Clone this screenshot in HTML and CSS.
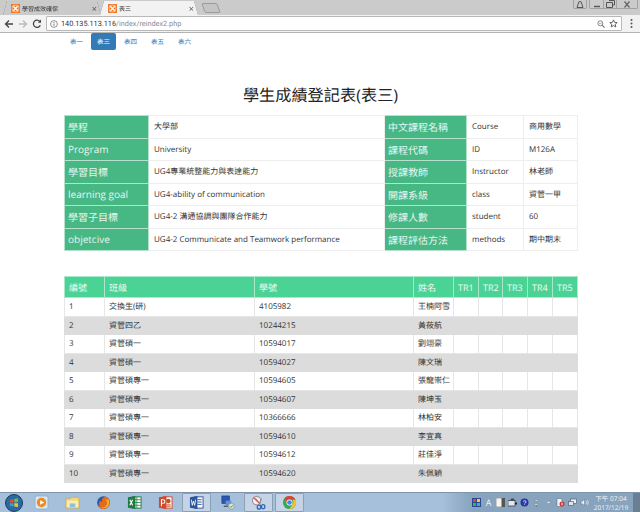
FILE: index.html
```html
<!DOCTYPE html>
<html lang="zh-Hant">
    <head>
        <meta charset="UTF-8" />
        <title>表三</title>
        <link rel="stylesheet" href="styles.css">
    </head>
    <body>
        <!-- 瀏覽器分頁列 -->
        <div class="tabstrip">
            <div class="tab">
                <div class="tab-shape">
                    <svg class="favicon" viewBox="0 0 11 11"><rect width="11" height="11" rx="1" fill="#f0701c"/><path d="M2.800 2.800l5.400 5.400M8.200 2.800L2.800 8.200" stroke="#fff" stroke-width="1.700"/><rect x="1.500" y="1.500" width="8" height="8" rx="2" fill="none" stroke="#fff" stroke-width=".7"/></svg>
                    <span class="tab-title">學習成效確保</span>
                    <span class="tab-close">×</span>
                </div>
            </div>
            <div class="tab active">
                <div class="tab-shape">
                    <svg class="favicon" viewBox="0 0 11 11"><rect width="11" height="11" rx="1" fill="#f0701c"/><path d="M2.800 2.800l5.400 5.400M8.200 2.800L2.800 8.200" stroke="#fff" stroke-width="1.700"/><rect x="1.500" y="1.500" width="8" height="8" rx="2" fill="none" stroke="#fff" stroke-width=".7"/></svg>
                    <span class="tab-title">表三</span>
                    <span class="tab-close">×</span>
                </div>
            </div>
            <div class="newtab"></div>
            <div class="winbtns">
                <div class="winbtn user"><svg viewBox="0 0 8 7" width="8" height="7"><path d="M4 .5a1.500 1.500 0 0 1 1.500 1.500L7 6.500H1L2.500 2A1.500 1.500 0 0 1 4 .5z" fill="none" stroke="#555"/></svg></div>
                <div class="winbtn min"><svg viewBox="0 0 8 7" width="8" height="7"><path d="M1 5.500h6" stroke="#555" stroke-width="1.400"/></svg></div>
                <div class="winbtn max"><svg viewBox="0 0 9 8" width="9" height="8"><path d="M3 .5h5.500v4.500H7M.5 2.500h6v5h-6z" fill="none" stroke="#555"/></svg></div>
                <div class="winbtn close"><svg viewBox="0 0 8 7" width="8" height="7"><path d="M1.500 .5l5 6M6.500 .5l-5 6" stroke="#666" stroke-width="1.300"/></svg></div>
            </div>
        </div>

        <!-- 網址列 -->
        <div class="toolbar">
            <svg class="tool" viewBox="0 0 10 10"><path d="M9 5H2M5 1.500L1.500 5 5 8.500" fill="none" stroke="#444" stroke-width="1.300"/></svg>
            <svg class="tool" viewBox="0 0 10 10"><path d="M1 5h7M5 1.500L8.500 5 5 8.500" fill="none" stroke="#bbb" stroke-width="1.300"/></svg>
            <svg class="tool" viewBox="0 0 10 10"><path d="M8.300 6.300A3.600 3.600 0 1 1 7.800 2.500" fill="none" stroke="#444" stroke-width="1.300"/><path d="M9 .6v3.200H5.800z" fill="#444"/></svg>
            <div class="omnibox">
                <svg class="info" viewBox="0 0 9 9"><circle cx="4.500" cy="4.500" r="3.800" fill="none" stroke="#666" stroke-width=".8"/><path d="M4.500 4v2.500M4.500 2.300v1" stroke="#666"/></svg>
                <span class="url"><span class="host">140.135.113.116</span>/index/reindex2.php</span>
                <svg class="omni-icon" viewBox="0 0 9 9"><circle cx="3.700" cy="3.700" r="2.800" fill="none" stroke="#777"/><path d="M5.800 5.800L8.500 8.500" stroke="#777" stroke-width="1.200"/><path d="M2.300 3.700h2.800" stroke="#777" stroke-width=".7"/></svg>
                <svg class="omni-icon star" viewBox="0 0 10 10"><path d="M5 1l1.200 2.700 2.900.3-2.200 1.900.7 2.900L5 7.300 2.400 8.800l.7-2.900L.9 4l2.900-.3z" fill="none" stroke="#555"/></svg>
            </div>
            <svg class="menu" viewBox="0 0 3 11"><circle cx="1.500" cy="2" r="1" fill="#555"/><circle cx="1.500" cy="5.500" r="1" fill="#555"/><circle cx="1.500" cy="9" r="1" fill="#555"/></svg>
        </div>

        <div class="page">
            <ul class="pills">
                <li><a href="#">表一</a></li>
                <li class="active"><a href="#">表三</a></li>
                <li><a href="#">表四</a></li>
                <li><a href="#">表五</a></li>
                <li><a href="#">表六</a></li>
            </ul>

            <h1 class="title">學生成績登記表(表三)</h1>

            <!-- 課程資料 -->
            <table class="info-table">
                <colgroup>
                    <col class="i1"><col class="i2"><col class="i3"><col class="i4"><col class="i5">
                </colgroup>
                <tr><th>學程</th><td>大學部</td><th>中文課程名稱</th><td>Course</td><td>商用數學</td></tr>
                <tr><th>Program</th><td>University</td><th>課程代碼</th><td>ID</td><td>M126A</td></tr>
                <tr><th>學習目標</th><td>UG4專業統整能力與表達能力</td><th>授課教師</th><td>Instructor</td><td>林老師</td></tr>
                <tr><th>learning goal</th><td>UG4-ability of communication</td><th>開課系級</th><td>class</td><td>資管一甲</td></tr>
                <tr><th>學習子目標</th><td>UG4-2 溝通協調與團隊合作能力</td><th>修課人數</th><td>student</td><td>60</td></tr>
                <tr><th>objetcive</th><td>UG4-2 Communicate and Teamwork performance</td><th>課程評估方法</th><td>methods</td><td>期中期末</td></tr>
            </table>

            <!-- 學生名單 -->
            <table class="grade-table">
                <colgroup>
                    <col class="g1"><col class="g2"><col class="g3"><col class="g4"><col class="g5"><col class="g6"><col class="g7"><col class="g8"><col class="g9">
                </colgroup>
                <tr><th>編號</th><th>班級</th><th>學號</th><th>姓名</th><th>TR1</th><th>TR2</th><th>TR3</th><th>TR4</th><th>TR5</th></tr>
                <tr><td>1</td><td>交換生(研)</td><td>4105982</td><td>王楠阿雪</td><td></td><td></td><td></td><td></td><td></td></tr>
                <tr><td>2</td><td>資管四乙</td><td>10244215</td><td>黃莜航</td><td></td><td></td><td></td><td></td><td></td></tr>
                <tr><td>3</td><td>資管碩一</td><td>10594017</td><td>劉翊豪</td><td></td><td></td><td></td><td></td><td></td></tr>
                <tr><td>4</td><td>資管碩一</td><td>10594027</td><td>陳文瑞</td><td></td><td></td><td></td><td></td><td></td></tr>
                <tr><td>5</td><td>資管碩專一</td><td>10594605</td><td>張龍崇仁</td><td></td><td></td><td></td><td></td><td></td></tr>
                <tr><td>6</td><td>資管碩專一</td><td>10594607</td><td>陳坤玉</td><td></td><td></td><td></td><td></td><td></td></tr>
                <tr><td>7</td><td>資管碩專一</td><td>10366666</td><td>林柏安</td><td></td><td></td><td></td><td></td><td></td></tr>
                <tr><td>8</td><td>資管碩專一</td><td>10594610</td><td>李宜真</td><td></td><td></td><td></td><td></td><td></td></tr>
                <tr><td>9</td><td>資管碩專一</td><td>10594612</td><td>莊佳淨</td><td></td><td></td><td></td><td></td><td></td></tr>
                <tr><td>10</td><td>資管碩專一</td><td>10594620</td><td>朱佩穎</td><td></td><td></td><td></td><td></td><td></td></tr>
            </table>
        </div>

        <!-- 工作列 -->
        <div class="taskbar">
            <div class="orb"><svg viewBox="0 0 18 18" width="18" height="18"><circle cx="9" cy="9" r="8.500" fill="#2c6aa2" stroke="#1c3c60"/><path d="M5 6l3.500-.8v3.300H5z" fill="#e8502c"/><path d="M9.300 5l3.700-.8v3.900L9.300 8.500z" fill="#7cbb3c"/><path d="M5 9.300h3.500v3.300L5 12z" fill="#3c9ae0"/><path d="M9.300 9.300H13v3.800l-3.700-.6z" fill="#f6c22c"/></svg></div>
            <div class="task"><svg viewBox="0 0 16 16"><rect x="1" y="1" width="14" height="14" rx="2" fill="#d7e6f2" stroke="#8fb0cc"/><circle cx="8" cy="8" r="5" fill="#f08a1c"/><path d="M6.500 5.500L11 8l-4.500 2.500z" fill="#fff"/></svg></div>
            <div class="task"><svg viewBox="0 0 16 16"><path d="M1 4h5l1-1.500h7l1 1.500v10H1z" fill="#f3d77e" stroke="#c6a040" stroke-width=".6"/><rect x="2" y="6" width="12" height="7" fill="#fbeeb4"/><path d="M5 9h6v4H5z" fill="#8cc0e0"/></svg></div>
            <div class="task"><svg viewBox="0 0 16 16"><circle cx="8" cy="8" r="6.800" fill="#2c5aa8"/><path d="M8 1.200a6.800 6.800 0 0 1 6.600 8.300c-.8 3-3.500 5.300-6.600 5.300-3 0-5.500-1.800-6.400-4.500.6.900 1.500 1.500 2.500 1.700C2.500 9.500 3.500 6.500 5 6c0 .6.800 1.100 1.500 1.100C6 5.500 7 3 9 2.500 8.800 2 8.500 1.500 8 1.200z" fill="#e8691c"/><path d="M13.500 5c1.300 3 .5 6-1.500 7.800-2 1.600-4.800 1.800-6.800.4 3 .8 6-1 6.600-3.800.3-1.600-.3-3.200-1.500-4.300 1 0 2.200.1 3.200-.1z" fill="#f6b22c"/></svg></div>
            <div class="task"><svg viewBox="0 0 16 16"><rect x="6" y="2" width="9" height="12" fill="#fff" stroke="#1f7a44"/><path d="M6 5h9M6 8h9M6 11h9M10.500 2v12" stroke="#1f7a44" stroke-width=".8"/><path d="M1 2.500L9 1v14L1 13.500z" fill="#1f7a44"/><path d="M3 5l3 6M6 5l-3 6" stroke="#fff" stroke-width="1.200"/></svg></div>
            <div class="task"><svg viewBox="0 0 16 16"><rect x="6" y="2" width="9" height="12" fill="#fff" stroke="#d2492a"/><path d="M9 10.500h4.500M9 12h4.500" stroke="#d2492a"/><circle cx="11" cy="6.500" r="2.500" fill="#d2492a"/><path d="M1 2.500L9 1v14L1 13.500z" fill="#d2492a"/><path d="M3.700 12V5h1.800a1.700 1.700 0 0 1 0 3.800H3.700" fill="none" stroke="#fff" stroke-width="1.100"/></svg></div>
            <div class="task open"><svg viewBox="0 0 16 16"><rect x="6" y="2" width="9" height="12" fill="#fff" stroke="#2b579a"/><path d="M9 5h4.500M9 7.500h4.500M9 10h4.500" stroke="#2b579a"/><path d="M1 2.500L9 1v14L1 13.500z" fill="#2b579a"/><path d="M2.500 5l1 6 1.200-4.500L6 11l1-6" fill="none" stroke="#fff" stroke-width=".9"/></svg></div>
            <div class="task"><svg viewBox="0 0 16 16"><rect x="2" y="1" width="8" height="8" fill="#2a58b0" stroke="#16306a" stroke-width=".6"/><rect x="6" y="6" width="6" height="5" fill="#6a8fd8"/><path d="M4 12h7" stroke="#444" stroke-width="1.200"/><circle cx="12" cy="12" r="3.200" fill="#dce6d8" stroke="#6d8b65" stroke-width=".6"/><path d="M10.500 12l1.200 1.300 2-2.300" fill="none" stroke="#3d9a3d"/></svg></div>
            <div class="task open"><svg viewBox="0 0 16 16"><circle cx="6" cy="6" r="4.500" fill="#eef0f2" stroke="#9a9a9a" stroke-width="1.200"/><path d="M2.800 2.800l6.400 6.400" stroke="#d84040" stroke-width="1.200"/><path d="M5 3.500l5.500 7M11 3.500L9 9" stroke="#8a8a8a"/><ellipse cx="8.500" cy="13" rx="1.800" ry="2.200" fill="none" stroke="#2e6ab8" stroke-width="1.400"/><ellipse cx="13" cy="12.500" rx="1.800" ry="2.200" fill="none" stroke="#2e6ab8" stroke-width="1.400"/></svg></div>
            <div class="task open"><svg viewBox="0 0 16 16"><circle cx="8" cy="8" r="7" fill="#3aa757"/><path d="M8 1a7 7 0 0 1 6.300 4H8a3 3 0 0 0-2.800 2L2.600 3.500A7 7 0 0 1 8 1z" fill="#e0402e"/><path d="M14.300 5A7 7 0 0 1 8 15l3-5a3 3 0 0 0-.2-5z" fill="#fbc02d"/><circle cx="8" cy="8" r="3.200" fill="#fff"/><circle cx="8" cy="8" r="2.500" fill="#4285f4"/></svg></div>

            <div class="tray">
                <svg class="tray-icon" viewBox="0 0 9 9"><rect width="9" height="9" fill="#2a4a90"/><path d="M1 1h3v3H1z" fill="#e04030"/><path d="M5 1h3v3H5z" fill="#f0d030"/><path d="M1 5h3v3H1z" fill="#40b050"/><path d="M5 5h3v3H5z" fill="#50a0e0"/></svg>
                <span class="tray-letter">A</span>
                <svg class="tray-icon" viewBox="0 0 9 9"><rect width="9" height="9" fill="#f4f4f4" stroke="#555" stroke-width=".5"/><rect x="5.500" width="3.500" height="9" fill="#555"/></svg>
                <svg class="tray-icon" viewBox="0 0 9 9"><rect x="0" y="2.500" width="7" height="5.500" fill="#e4e8ec" stroke="#334" stroke-width=".7"/><path d="M2 2.500L3.500 .5h2L7 2.500" fill="#445"/><path d="M7 4.500h2v2H7z" fill="#223"/></svg>
                <svg class="tray-icon" viewBox="0 0 9 9"><circle cx="4.500" cy="4.500" r="4" fill="#2538a8"/><text x="4.500" y="7" font-size="6.500" text-anchor="middle" fill="#fff" font-family="Liberation Sans">?</text></svg>
                <svg class="tray-icon" viewBox="0 0 9 9"><path d="M3 1.500h3v1.500H3zM2.500 5.500h3.500v1.500H2.500z" fill="#e8eef4" stroke="#567" stroke-width=".4"/><path d="M4 7.500h1v1H4z" fill="#567"/></svg>
                <svg class="tray-icon" viewBox="0 0 9 9"><path d="M3 5l1.500-1.500L6 5z" fill="#f0f4f8"/></svg>
                <svg class="tray-icon" viewBox="0 0 9 9"><path d="M1 .5h4l1 1.500v6.500H1z" fill="#eef2f6" stroke="#567" stroke-width=".5"/><circle cx="6" cy="6" r="2.500" fill="#d83030"/><path d="M6 4.700v2.600" stroke="#fff"/></svg>
                <svg class="tray-icon" viewBox="0 0 9 9"><rect x="2.500" y="1" width="6" height="4.500" fill="#e8eef4" stroke="#456" stroke-width=".6"/><rect x=".5" y="3.500" width="5" height="4" fill="#dde6ee" stroke="#456" stroke-width=".6"/></svg>
                <svg class="tray-icon" viewBox="0 0 9 9"><path d="M1 3.200h1.500L4.500 1.200v6.600L2.500 5.800H1z" fill="#e8eef4" stroke="#567" stroke-width=".4"/><path d="M6 3a2 2 0 0 1 0 3M7.200 2a3.500 3.500 0 0 1 0 5" fill="none" stroke="#e8eef4" stroke-width=".7"/></svg>
            </div>
            <div class="clock">
                <div>下午 07:04</div>
                <div>2017/12/19</div>
            </div>
            <div class="showdesk"></div>
        </div>
    </body>
</html>
```

FILE: styles.css
```css
html, body {
    margin: 0;
    padding: 0;
    height: 100%;
    overflow: hidden;
}

body {
    display: flex;
    flex-direction: column;
    background-color: #fff;
    font-family: "Open Sans", "Noto Sans CJK TC", sans-serif;
    text-rendering: geometricPrecision;
    color: #333;
}

/* 分頁列 */
.tabstrip {
    height: 15px;
    flex: none;
    display: flex;
    align-items: flex-end;
    padding-left: 3px;
    background-color: #cbcbcb;
}

.tab {
    width: 98px;
    height: 14px;
    margin-right: -1px;
    filter: drop-shadow(0 0 .6px #666);
}

.tab-shape {
    height: 100%;
    padding: 0 4px 0 8px;
    box-sizing: border-box;
    display: flex;
    align-items: center;
    background-color: #cacaca;
    clip-path: polygon(0 100%, 4px 0, 94px 0, 98px 100%);
    font-size: 6px;
    color: #333;
}

.tab.active .tab-shape {
    background-color: #f2f2f2;
}

.favicon {
    width: 9px;
    height: 9px;
    flex: none;
    margin-right: 2px;
}

.tab-title {
    flex: 1;
    white-space: nowrap;
}

.tab-close {
    font-size: 9px;
    line-height: 1;
    color: #444;
}

.newtab {
    width: 14px;
    height: 8px;
    margin-left: 6px;
    margin-bottom: 2px;
    background-color: #c4c4c4;
    border: 1px solid #9a9a9a;
    border-radius: 2px;
    transform: skewX(20deg);
}

.winbtns {
    margin-left: auto;
    margin-right: 2px;
    align-self: flex-start;
    display: flex;
}

.winbtn {
    height: 8px;
    display: flex;
    align-items: center;
    justify-content: center;
    border: 1px solid #a2a2a2;
    border-top: none;
    margin-right: -1px;
}

.winbtn svg {
    display: block;
}

.winbtn.user {
    width: 12px;
    margin-right: 2px;
    border-radius: 0 0 2px 2px;
}

.winbtn.min {
    width: 13px;
    border-radius: 0 0 0 2px;
}

.winbtn.max {
    width: 12px;
}

.winbtn.close {
    width: 20px;
    margin-right: 0;
    border-radius: 0 0 2px 0;
}

/* 網址列 */
.toolbar {
    height: 18px;
    flex: none;
    box-sizing: border-box;
    display: flex;
    align-items: center;
    padding-left: 4px;
    background-color: #f2f2f2;
    border-bottom: 1px solid #b4b4b4;
}

.tool {
    width: 10px;
    height: 10px;
    flex: none;
    margin-right: 4px;
}

.omnibox {
    width: 576px;
    height: 15px;
    box-sizing: border-box;
    display: flex;
    align-items: center;
    padding: 0 3px;
    background-color: #fff;
    border: 1px solid #b8b8b8;
    border-radius: 1px;
    font-family: Roboto, sans-serif;
    font-size: 7.300px;
}

.info {
    width: 8px;
    height: 8px;
    margin-right: 3px;
}

.url {
    flex: 1;
    color: #8a8a8a;
}

.host {
    color: #333;
}

.omni-icon {
    width: 8px;
    height: 8px;
    margin-left: 4px;
}

.omni-icon.star {
    width: 9px;
    height: 9px;
}

.menu {
    width: 3px;
    height: 11px;
    margin-left: 8px;
}

/* 內容 */
.page {
    flex: 1;
    min-height: 0;
    padding-left: 64px;
}

.pills {
    display: flex;
    gap: 2px;
    margin: 0;
    padding: 0;
    list-style: none;
}

.pills a {
    display: block;
    width: 25px;
    height: 17px;
    border-radius: 2px;
    font-size: 6.500px;
    line-height: 17px;
    text-align: center;
    text-decoration: none;
    color: #337ab7;
}

.pills .active a {
    background-color: #337ab7;
    color: #fff;
}

.title {
    width: 513px;
    margin: 34px 0 0;
    font-size: 16.200px;
    font-weight: 400;
    line-height: 22px;
    text-align: center;
    color: #222;
}

table {
    width: 513px;
    table-layout: fixed;
    border-collapse: collapse;
    font-size: 8px;
}

th, td {
    padding: 0 0 0 5px;
    border: 1px solid #eee;
    text-align: left;
    font-weight: 400;
    white-space: nowrap;
    overflow: hidden;
}

.info-table {
    margin-top: 9px;
}

.info-table tr {
    height: 22.500px;
}

.info-table th {
    padding-left: 3px;
    background-color: #47b784;
    border-color: #b4e2cd;
    font-size: 10px;
    color: #e8f6ef;
}

.i1 { width: 84px; }
.i2 { width: 236px; }
.i3 { width: 82px; }
.i4 { width: 57px; }
.i5 { width: 54px; }

.grade-table {
    margin-top: 25px;
}

.grade-table tr {
    height: 18.500px;
}

.grade-table tr:first-child {
    height: 21px;
}

.grade-table tr:nth-child(odd) td {
    background-color: #dcdcdc;
    border-color: #dcdcdc;
}

.grade-table tr:first-child th {
    padding-left: 4px;
    background-color: #4bd395;
    border-color: #a8e8cb;
    font-size: 9px;
    color: #f0fbf6;
}

.grade-table td {
    padding-left: 4px;
    border-color: #e6e6e6;
}

.g1 { width: 40px; }
.g2 { width: 150px; }
.g3 { width: 159px; }
.g4 { width: 40px; }
.g5 { width: 25px; }
.g6 { width: 24px; }
.g7 { width: 25px; }
.g8 { width: 25px; }
.g9 { width: 25px; }

/* 工作列 */
.taskbar {
    height: 20px;
    flex: none;
    display: flex;
    align-items: center;
    background-color: #a6bfdb;
    border-top: 1px solid #7f94aa;
    box-sizing: border-box;
}

.orb {
    width: 27px;
    display: flex;
    justify-content: center;
}

.task {
    width: 29px;
    height: 19px;
    margin-right: 2px;
    box-sizing: border-box;
    display: flex;
    align-items: center;
    justify-content: center;
}

.task svg {
    width: 15px;
    height: 15px;
}

.task.open {
    background-color: #c4d4e6;
    border: 1px solid #8aa0b6;
    border-radius: 1px;
}

.tray {
    margin-left: auto;
    display: flex;
    align-items: center;
    gap: 3px;
    padding-left: 30px;
    background: linear-gradient(to right, rgba(136, 163, 190, 0), #88a3be 30px);
    height: 100%;
}

.tray-icon {
    width: 9px;
    height: 9px;
}

.tray-letter {
    width: 9px;
    font-size: 9px;
    line-height: 1;
    text-align: center;
    color: #eef2f6;
}

.clock {
    width: 44px;
    height: 100%;
    display: flex;
    flex-direction: column;
    justify-content: center;
    background-color: #88a3be;
    font-size: 6.500px;
    line-height: 9px;
    text-align: center;
    color: #f0f4f8;
}

.showdesk {
    width: 7px;
    height: 100%;
    background-color: #6b7f94;
}
```
